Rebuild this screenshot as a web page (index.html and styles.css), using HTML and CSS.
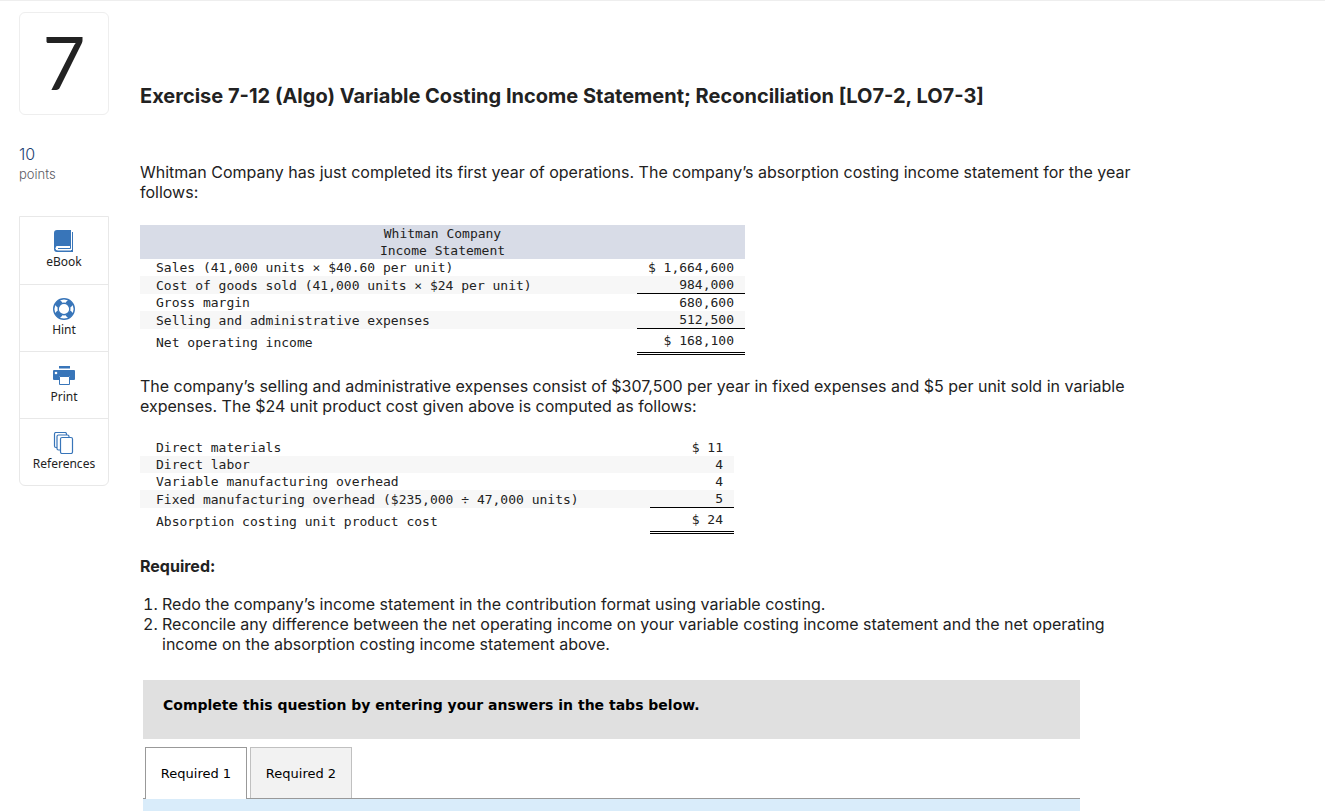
FILE: index.html
```html
<!DOCTYPE html>
<html lang="en">
<head>
    <meta charset="UTF-8">
    <meta name="viewport" content="width=device-width, initial-scale=1.0">
    <title>Exercise 7-12</title>
    <link rel="stylesheet" href="styles.css">
</head>
<body>
    <div class="page">
        <aside class="sidebar">
            <div class="question-number">7</div>
            <div class="points">
                <div class="points-value">10</div>
                <div class="points-label">points</div>
            </div>
            <nav class="tools">
                <a href="#" class="tool">
                    <svg class="tool-icon" viewBox="0 0 22 22">
                        <path d="M4 0H18V16H4.500Q3 16 3 17.500V18.500Q3 20 4.500 20H19V2H20V22H4Q1 22 1 19V3Q1 0 4 0Z" fill="#3875b9"/>
                        <path d="M18 16H5Q2.500 16 2.500 18.200Q2.500 20.500 5 20.500H18Z" fill="#fff"/>
                        <path d="M5 18.500H17.500V16" fill="none" stroke="#3875b9"/>
                    </svg>
                    <span>eBook</span>
                </a>
                <a href="#" class="tool">
                    <svg class="tool-icon" viewBox="0 0 22 22">
                        <circle cx="11" cy="11" r="10.300" fill="none" stroke="#3875b9" stroke-width="1.400"/>
                        <circle cx="11" cy="11" r="5.800" fill="none" stroke="#3875b9" stroke-width="1.400"/>
                        <g stroke="#3875b9" stroke-width="7">
                            <path d="M4 4L7 7M18 4L15 7M4 18L7 15M18 18L15 15"/>
                        </g>
                    </svg>
                    <span>Hint</span>
                </a>
                <a href="#" class="tool">
                    <svg class="tool-icon" viewBox="0 0 22 22">
                        <path d="M6 1H17V3.500H6ZM1 5H21Q22 5 22 6V14Q22 15 21 15H17V11H6V15H1Q0 15 0 14V6Q0 5 1 5Z" fill="#3875b9"/>
                        <path d="M6.500 11.500H16.500V19.500H6.500Z" fill="#fff" stroke="#3875b9"/>
                        <circle cx="3" cy="8" r="1.300" fill="#fff"/>
                    </svg>
                    <span>Print</span>
                </a>
                <a href="#" class="tool">
                    <svg class="tool-icon" viewBox="0 0 22 22">
                        <g fill="#fff" stroke="#3875b9" stroke-width="1.200">
                            <rect x="1.500" y=".5" width="12" height="15" rx="1.500"/>
                            <rect x="4" y="3" width="12" height="15" rx="1.500"/>
                            <rect x="7.500" y="5.500" width="12" height="16" rx="1.500"/>
                        </g>
                    </svg>
                    <span>References</span>
                </a>
            </nav>
        </aside>

        <main class="content">
            <h1 class="title">Exercise 7-12 (Algo) Variable Costing Income Statement; Reconciliation [LO7-2, LO7-3]</h1>

            <p class="text">Whitman Company has just completed its first year of operations. The company’s absorption costing income statement for the year follows:</p>

            <table class="data income">
                <thead>
                    <tr><th colspan="2">Whitman Company<br>Income Statement</th></tr>
                </thead>
                <tbody>
                    <tr><td>Sales (41,000 units × $40.60 per unit)</td><td class="amount">$ 1,664,600</td></tr>
                    <tr class="shaded"><td>Cost of goods sold (41,000 units × $24 per unit)</td><td class="amount line">984,000</td></tr>
                    <tr><td>Gross margin</td><td class="amount">680,600</td></tr>
                    <tr class="shaded"><td>Selling and administrative expenses</td><td class="amount line">512,500</td></tr>
                    <tr class="total"><td>Net operating income</td><td class="amount">$ 168,100</td></tr>
                </tbody>
            </table>

            <p class="text">The company’s selling and administrative expenses consist of $307,500 per year in fixed expenses and $5 per unit sold in variable expenses. The $24 unit product cost given above is computed as follows:</p>

            <table class="data costs">
                <tbody>
                    <tr><td>Direct materials</td><td class="amount">$ 11</td></tr>
                    <tr class="shaded"><td>Direct labor</td><td class="amount">4</td></tr>
                    <tr><td>Variable manufacturing overhead</td><td class="amount">4</td></tr>
                    <tr class="shaded"><td>Fixed manufacturing overhead ($235,000 ÷ 47,000 units)</td><td class="amount line">5</td></tr>
                    <tr class="total"><td>Absorption costing unit product cost</td><td class="amount">$ 24</td></tr>
                </tbody>
            </table>

            <h2 class="required">Required:</h2>
            <ol class="steps">
                <li>Redo the company’s income statement in the contribution format using variable costing.</li>
                <li>Reconcile any difference between the net operating income on your variable costing income statement and the net operating income on the absorption costing income statement above.</li>
            </ol>

            <section class="answer">
                <div class="instructions">Complete this question by entering your answers in the tabs below.</div>
                <div class="tabs" role="tablist">
                    <button type="button" class="tab active" role="tab" aria-selected="true">Required 1</button>
                    <button type="button" class="tab" role="tab" aria-selected="false">Required 2</button>
                </div>
                <div class="tab-panel" role="tabpanel"></div>
            </section>
        </main>
    </div>
</body>
</html>
```
FILE: styles.css
```css
* {
    box-sizing: border-box;
    margin: 0;
    padding: 0;
}
body {
    border-top: 1px solid #eee;
    background-color: #fff;
    color: #222;
    font-family: Inter, "Liberation Sans", sans-serif;
    font-size: 16px;
    line-height: 20px;
}
.page {
    display: flex;
    gap: 31px;
    padding: 11px 170px 0 19px;
}
.sidebar {
    flex: 0 0 90px;
}
.question-number {
    height: 103px;
    border: 1px solid #eee;
    border-radius: 6px;
    font-family: Lato, sans-serif;
    font-size: 74px;
    line-height: 98px;
    text-align: center;
}
.points {
    padding: 29px 0 32px;
}
.points-value {
    color: #1c3f73;
    font-weight: 300;
}
.points-label {
    color: #5b5b65;
    font-size: 13px;
    font-weight: 300;
}
.tools {
    border: 1px solid #e8e8e8;
    border-radius: 0 0 6px 6px;
}
.tool {
    display: flex;
    flex-direction: column;
    align-items: center;
    height: 67px;
    padding-top: 13px;
    color: #222;
    font-family: "Noto Sans", sans-serif;
    font-size: 12px;
    text-decoration: none;
}
.tool + .tool {
    border-top: 1px solid #e8e8e8;
}
.tool-icon {
    width: 22px;
    height: 22px;
}
.content {
    flex: 1;
    min-width: 0;
    padding-top: 74px;
}
.title {
    margin-bottom: 56px;
    font-size: 20px;
    font-weight: 700;
    line-height: 20px;
}
.text {
    margin-bottom: 23px;
}
.data {
    margin-bottom: 21px;
    border-spacing: 0;
    font-family: "DejaVu Sans Mono", monospace;
    font-size: 13px;
    line-height: 17px;
}
.data th {
    background-color: #d8dce7;
    font-weight: normal;
}
.data td {
    padding-left: 16px;
}
.data .amount {
    padding: 0 11px 0 0;
    text-align: right;
}
.income {
    width: 605px;
}
.income .amount {
    width: 108px;
}
.costs {
    width: 594px;
}
.costs .amount {
    width: 84px;
}
.shaded {
    background-color: #f7f7f7;
}
.data .line {
    border-bottom: 1px solid #000;
}
.data .total .amount {
    padding: 3px 11px 3px 0;
    border-bottom: 3px double #000;
}
.required {
    margin: 22px 0 18px;
    font-size: 16px;
    font-weight: 700;
}
.steps {
    padding-left: 22px;
}
.answer {
    max-width: 937px;
    margin: 26px 0 0 3px;
    color: #000;
    font-family: "DejaVu Sans", sans-serif;
    font-size: 13px;
}
.instructions {
    height: 59px;
    padding: 15px 20px;
    background-color: #e0e0e0;
    font-size: 14px;
    font-weight: bold;
}
.tabs {
    display: flex;
    gap: 3px;
    margin-top: 8px;
    padding-left: 2px;
    border-bottom: 1px solid #999;
}
.tab {
    width: 102px;
    height: 51px;
    padding-top: 1px;
    border: 1px solid #c0c0c0;
    border-bottom: 0;
    background-color: #f2f2f2;
    color: #000;
    font: inherit;
}
.tab.active {
    height: 52px;
    margin-bottom: -1px;
    padding-top: 0;
    border-color: #999;
    background-color: #fff;
}
.tab-panel {
    height: 12px;
    background-color: #d9ecfa;
}
```
